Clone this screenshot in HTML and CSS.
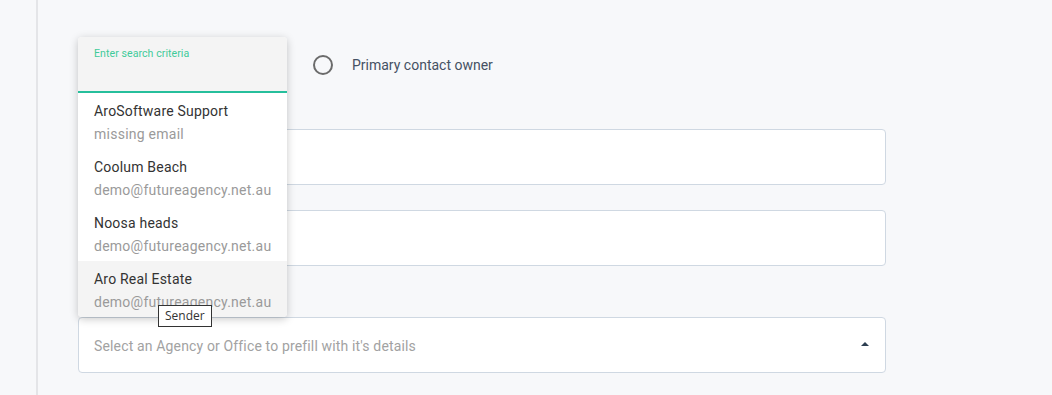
FILE: index.html
```html
<!DOCTYPE html>
<html lang="en">
<head>
<meta charset="utf-8">
<title>Sender</title>
<link rel="stylesheet" href="styles.css">
</head>
<body>
<div class="page">
  <aside class="rail"></aside>
  <main class="main">
    <div class="form">
      <div class="radio-row">
        <div class="radio-option first"><span class="radio"></span></div>
        <label class="radio-option"><span class="radio"></span><span class="radio-label">Primary contact owner</span></label>
      </div>
      <div class="field"></div>
      <div class="field second"></div>
      <div class="field-label"></div>
      <div class="field select">
        <span class="placeholder">Select an Agency or Office to prefill with it's details</span>
        <span class="caret"></span>
      </div>
    </div>

    <div class="dropdown">
      <div class="search">
        <span class="search-label">Enter search criteria</span>
      </div>
      <ul class="options">
        <li class="option"><span class="opt-title">AroSoftware Support</span><span class="opt-sub">missing email</span></li>
        <li class="option"><span class="opt-title">Coolum Beach</span><span class="opt-sub">demo@futureagency.net.au</span></li>
        <li class="option"><span class="opt-title">Noosa heads</span><span class="opt-sub">demo@futureagency.net.au</span></li>
        <li class="option hover"><span class="opt-title">Aro Real Estate</span><span class="opt-sub">demo@futureagency.net.au</span></li>
      </ul>
    </div>
    <div class="tooltip">Sender</div>
  </main>
</div>
</body>
</html>
```

FILE: styles.css
```css
* { box-sizing: border-box; }
html, body { margin: 0; padding: 0; }
body {
  background: #f7f8fa;
  font-family: Roboto, "Liberation Sans", sans-serif;
  font-size: 14px;
  overflow: hidden;
}
.page {
  display: flex;
  height: 395px;
}
.rail {
  width: 38px;
  flex: none;
  border-right: 2px solid #e4e5e8;
}
.main {
  flex: 1;
  padding-left: 40px;
  position: relative;
}
.form {
  width: 808px;
}
.radio-row {
  margin-top: 45px;
  height: 40px;
  display: flex;
  align-items: center;
}
.radio-option {
  display: flex;
  align-items: center;
  gap: 19px;
  color: #455163;
  font-size: 14px;
}
.radio-option.first {
  width: 235px;
}
.radio {
  width: 20px;
  height: 20px;
  border: 2px solid #6b6b6b;
  border-radius: 50%;
  flex: none;
}
.field {
  height: 56px;
  margin-top: 44px;
  background: #fff;
  border: 1px solid #cfd8e2;
  border-radius: 4px;
}
.field.second {
  margin-top: 25px;
}
.field-label {
  height: 51px;
}
.field.select {
  margin-top: 0;
  display: flex;
  align-items: center;
  justify-content: space-between;
  padding: 0 16px 0 15px;
}
.placeholder {
  color: #a2a2a2;
  font-size: 14px;
  letter-spacing: 0.15px;
  margin-top: 1px;
}
.caret {
  width: 0;
  height: 0;
  border-left: 4px solid transparent;
  border-right: 4px solid transparent;
  border-bottom: 4px solid #2c3e50;
  margin-top: -3px;
}
.dropdown {
  position: absolute;
  left: 40px;
  top: 37px;
  width: 209px;
  background: #fff;
  border-radius: 4px;
  box-shadow: 0 2px 9px rgba(0, 0, 0, 0.22);
  overflow: hidden;
}
.search {
  height: 56px;
  background: #f4f4f4;
  border-bottom: 2px solid #26bf9c;
  padding: 10px 16px 0;
}
.search-label {
  display: block;
  color: #3fcb9a;
  font-size: 10.6px;
  letter-spacing: 0.05px;
  line-height: 14px;
}
.options {
  list-style: none;
  margin: 0;
  padding: 0;
}
.option {
  height: 56px;
  padding: 8px 16px 0;
  display: flex;
  flex-direction: column;
  gap: 3px;
  letter-spacing: 0.2px;
}
.option.hover {
  background: #f4f4f4;
}
.opt-title {
  color: #333;
  line-height: 20px;
}
.opt-sub {
  color: #9a9a9a;
  line-height: 20px;
  letter-spacing: 0.25px;
}
.tooltip {
  position: absolute;
  left: 120px;
  top: 305px;
  height: 22px;
  padding: 0 6px;
  background: #fff;
  border: 1px solid #333;
  color: #333;
  font-family: "Open Sans", "DejaVu Sans", sans-serif;
  font-size: 12px;
  line-height: 20px;
}
```
